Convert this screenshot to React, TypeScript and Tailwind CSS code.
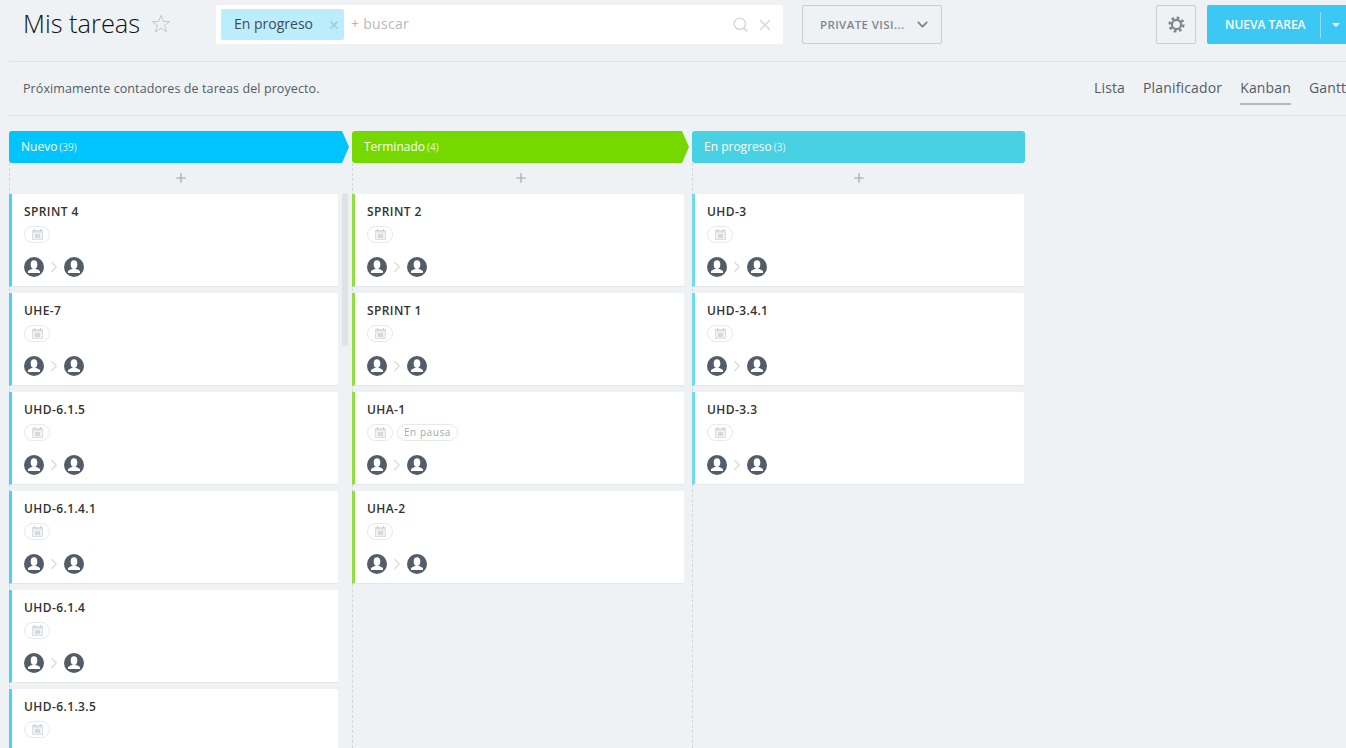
import { ChevronDown, ChevronRight, Plus, Search, X } from 'lucide-react';

type Task = { title: string; tag?: string };

type ColumnData = {
	name: string;
	count: number;
	headerColor: string;
	accent: string;
	arrow: boolean;
	width: string;
	headerWidth: string;
	cardWidth: string;
	addWidth: string;
	tasks: Task[];
};

const columns: ColumnData[] = [
	{
		name: 'Nuevo',
		count: 39,
		headerColor: 'bg-[#00c4fb]',
		accent: 'border-l-[#47d1fd]',
		arrow: true,
		width: 'w-[343px]',
		headerWidth: 'w-[340px]',
		cardWidth: 'w-[329px]',
		addWidth: 'w-[341px]',
		tasks: [
			{ title: 'SPRINT 4' },
			{ title: 'UHE-7' },
			{ title: 'UHD-6.1.5' },
			{ title: 'UHD-6.1.4.1' },
			{ title: 'UHD-6.1.4' },
			{ title: 'UHD-6.1.3.5' },
		],
	},
	{
		name: 'Terminado',
		count: 4,
		headerColor: 'bg-[#75d900]',
		accent: 'border-l-[#8fe040]',
		arrow: true,
		width: 'w-[340px]',
		headerWidth: 'w-[337px]',
		cardWidth: 'w-[332px]',
		addWidth: 'w-[336px]',
		tasks: [
			{ title: 'SPRINT 2' },
			{ title: 'SPRINT 1' },
			{ title: 'UHA-1', tag: 'En pausa' },
			{ title: 'UHA-2' },
		],
	},
	{
		name: 'En progreso',
		count: 3,
		headerColor: 'bg-[#47d1e2]',
		accent: 'border-l-[#6fdcea]',
		arrow: false,
		width: 'w-[333px]',
		headerWidth: 'w-[333px]',
		cardWidth: 'w-[332px]',
		addWidth: 'w-[332px]',
		tasks: [{ title: 'UHD-3' }, { title: 'UHD-3.4.1' }, { title: 'UHD-3.3' }],
	},
];

function Avatar() {
	return (
		<svg width="20" height="20" viewBox="0 0 20 20" className="shrink-0">
			<circle cx="10" cy="10" r="10" fill="#535c69" />
			<ellipse cx="10" cy="7.6" rx="3.3" ry="4.4" fill="#fff" />
			<path d="M4 16v-1.6c0-1 2-1.5 4-2.4h4c2 .9 4 1.4 4 2.4V16z" fill="#fff" />
		</svg>
	);
}

function CalendarIcon() {
	return (
		<svg width="11" height="11" viewBox="0 0 11 11">
			<rect x="0" y="1" width="11" height="10" fill="#dcdfe2" />
			<rect x="1" y="3.5" width="9" height="6.5" fill="#f0f2f3" />
			<rect x="2" y="0" width="1" height="2" fill="#c9cdd1" />
			<rect x="8" y="0" width="1" height="2" fill="#c9cdd1" />
			<rect x="3" y="5" width="5" height="4" fill="#d5d8dc" />
		</svg>
	);
}

function GearIcon() {
	return (
		<svg width="17" height="17" viewBox="0 0 17 17">
			<circle cx="8.5" cy="8.5" r="4.6" fill="none" stroke="#7f8690" strokeWidth="2.2" />
			<circle
				cx="8.5"
				cy="8.5"
				r="6.8"
				fill="none"
				stroke="#7f8690"
				strokeWidth="2.6"
				strokeDasharray="2.7 2.64"
			/>
		</svg>
	);
}

function StarIcon() {
	return (
		<svg width="20" height="20" viewBox="0 0 20 20" className="shrink-0 ml-[8px] mt-[9px]">
			<path
				d="M10 1.5l2.4 6h6.3l-5.1 3.9 1.9 6.6L10 14.1 4.5 18l1.9-6.6L1.3 7.5h6.3z"
				fill="none"
				stroke="#c3c7cb"
				strokeWidth="1"
			/>
		</svg>
	);
}

function TaskCard({ task, accent, width }: { task: Task; accent: string; width: string }) {
	return (
		<div
			className={`${width} h-[93px] mb-[6px] shrink-0 bg-white rounded-r-[2px] border-l-[3px] ${accent} border-b border-b-[#e3e7ea] pl-3 pt-[10px]`}
		>
			<div className="h-[15px] leading-[15px] text-[12px] font-semibold text-[#333] tracking-[0.4px]">
				{task.title}
			</div>
			<div className="flex gap-[4px] mt-[7px] h-[17px]">
				<span className="flex items-center justify-center w-[26px] h-[17px] rounded-full border border-[#e6e8ea]">
					<CalendarIcon />
				</span>
				{task.tag && (
					<span className="flex items-center h-[17px] px-[6px] rounded-full border border-[#e6e8ea] text-[10px] text-[#a3a9b1] tracking-[0.55px]">
						{task.tag}
					</span>
				)}
			</div>
			<div className="flex items-center mt-[14px]">
				<Avatar />
				<ChevronRight size={18} strokeWidth={1.6} className="shrink-0 mx-px text-[#d8dadd]" />
				<Avatar />
			</div>
		</div>
	);
}

function Column({ column }: { column: ColumnData }) {
	return (
		<div className={`${column.width} shrink-0 flex flex-col`}>
			<div
				className={`${column.headerWidth} ${column.headerColor} h-8 shrink-0 flex items-center gap-[2px] pl-3 text-white text-[12px] ${
					column.arrow
						? 'rounded-l-[3px] [clip-path:polygon(0_0,calc(100%-7px)_0,100%_50%,calc(100%-7px)_100%,0_100%)]'
						: 'rounded-[3px]'
				}`}
			>
				<span>{column.name}</span>
				<span className="text-[10px] opacity-80">({column.count})</span>
			</div>
			<div className="flex-1 border-l border-dashed border-l-[#d3d7db]">
				<div className={`${column.addWidth} h-[31px] pb-[2px] flex items-center justify-center text-[#b5b9bf]`}>
					<Plus size={14} strokeWidth={2.8} />
				</div>
				{column.tasks.map((task) => (
					<div key={task.title} className="-ml-px">
						<TaskCard task={task} accent={column.accent} width={column.cardWidth} />
					</div>
				))}
			</div>
		</div>
	);
}

export default function App() {
	return (
		<div className="relative w-[1346px] h-[748px] overflow-hidden bg-[#eef2f4] font-['Open_Sans',sans-serif]">
			<div className="h-[62px] ml-[9px] flex items-start border-b border-b-[#dfe3e6] pt-[5px]">
				<h1 className="w-[120px] ml-[14px] shrink-0 text-[25.4px] leading-[36px] font-light text-[#111] whitespace-nowrap">
					Mis tareas
				</h1>
				<StarIcon />
				<div className="w-[567px] h-[39px] ml-[45px] shrink-0 flex items-center bg-white rounded-[2px] pl-[5px]">
					<div className="w-[123px] h-[31px] pb-[2px] flex items-center bg-[#bcedfc] rounded-[2px] pl-[13px] text-[14px] text-[#424956]">
						En progreso
						<X size={12} strokeWidth={3.4} className="ml-[15px] mt-[2px] text-[#a9c9d5]" />
					</div>
					<span className="ml-[7px] pb-[2px] text-[14px] tracking-[0.3px] text-[#b5b9be]">+ buscar</span>
					<Search size={17} strokeWidth={2} className="ml-auto text-[#d3d6d9]" />
					<X size={18} strokeWidth={1.8} className="ml-[7px] mr-[9px] text-[#d3d6d9]" />
				</div>
				<button className="w-[140px] h-[39px] ml-[19px] shrink-0 flex items-center pl-[17px] border border-[#c6cdd3] rounded-[2px] text-[11.5px] font-semibold tracking-[0.4px] text-[#7f8690]">
					PRIVATE VISI...
					<ChevronDown size={17} strokeWidth={2.6} className="ml-[9px]" />
				</button>
				<button className="w-10 h-[39px] ml-[214px] shrink-0 flex items-center justify-center border border-[#c6cdd3] rounded-[2px]">
					<GearIcon />
				</button>
				<button className="w-[150px] h-[39px] ml-[11px] shrink-0 flex items-center pl-[18px] bg-[#3bc8f5] rounded-l-[2px] text-[12px] font-semibold text-white whitespace-nowrap">
					NUEVA TAREA
					<span className="w-px h-[26px] ml-[14px] bg-[#8fe0f9]" />
					<span className="ml-[11px] border-x-[4px] border-x-transparent border-t-[4px] border-t-white" />
				</button>
			</div>

			<div className="h-[54px] ml-[9px] flex border-b border-b-[#dfe3e6]">
				<p className="w-[1071px] ml-[14px] shrink-0 pt-[18px] text-[12.5px] leading-[17px] tracking-[0.1px] text-[#535c69]">
					Próximamente contadores de tareas del proyecto.
				</p>
				<nav className="flex gap-[18px] shrink-0 text-[14px] tracking-[0.15px] text-[#535c69]">
					<a className="pt-[16px] leading-[20px]">Lista</a>
					<a className="pt-[16px] leading-[20px]">Planificador</a>
					<a className="h-[43px] pt-[16px] leading-[20px] border-b-2 border-b-[#b5b9c0]">Kanban</a>
					<a className="pt-[16px] leading-[20px]">Gantt</a>
				</nav>
			</div>

			<div className="flex h-[632px] mt-[15px] ml-[9px]">
				{columns.map((column) => (
					<Column key={column.name} column={column} />
				))}
			</div>

			<div className="absolute left-[342px] top-[193px] w-[6px] h-[153px] rounded-full bg-[#dfe3e6]" />
		</div>
	);
}
